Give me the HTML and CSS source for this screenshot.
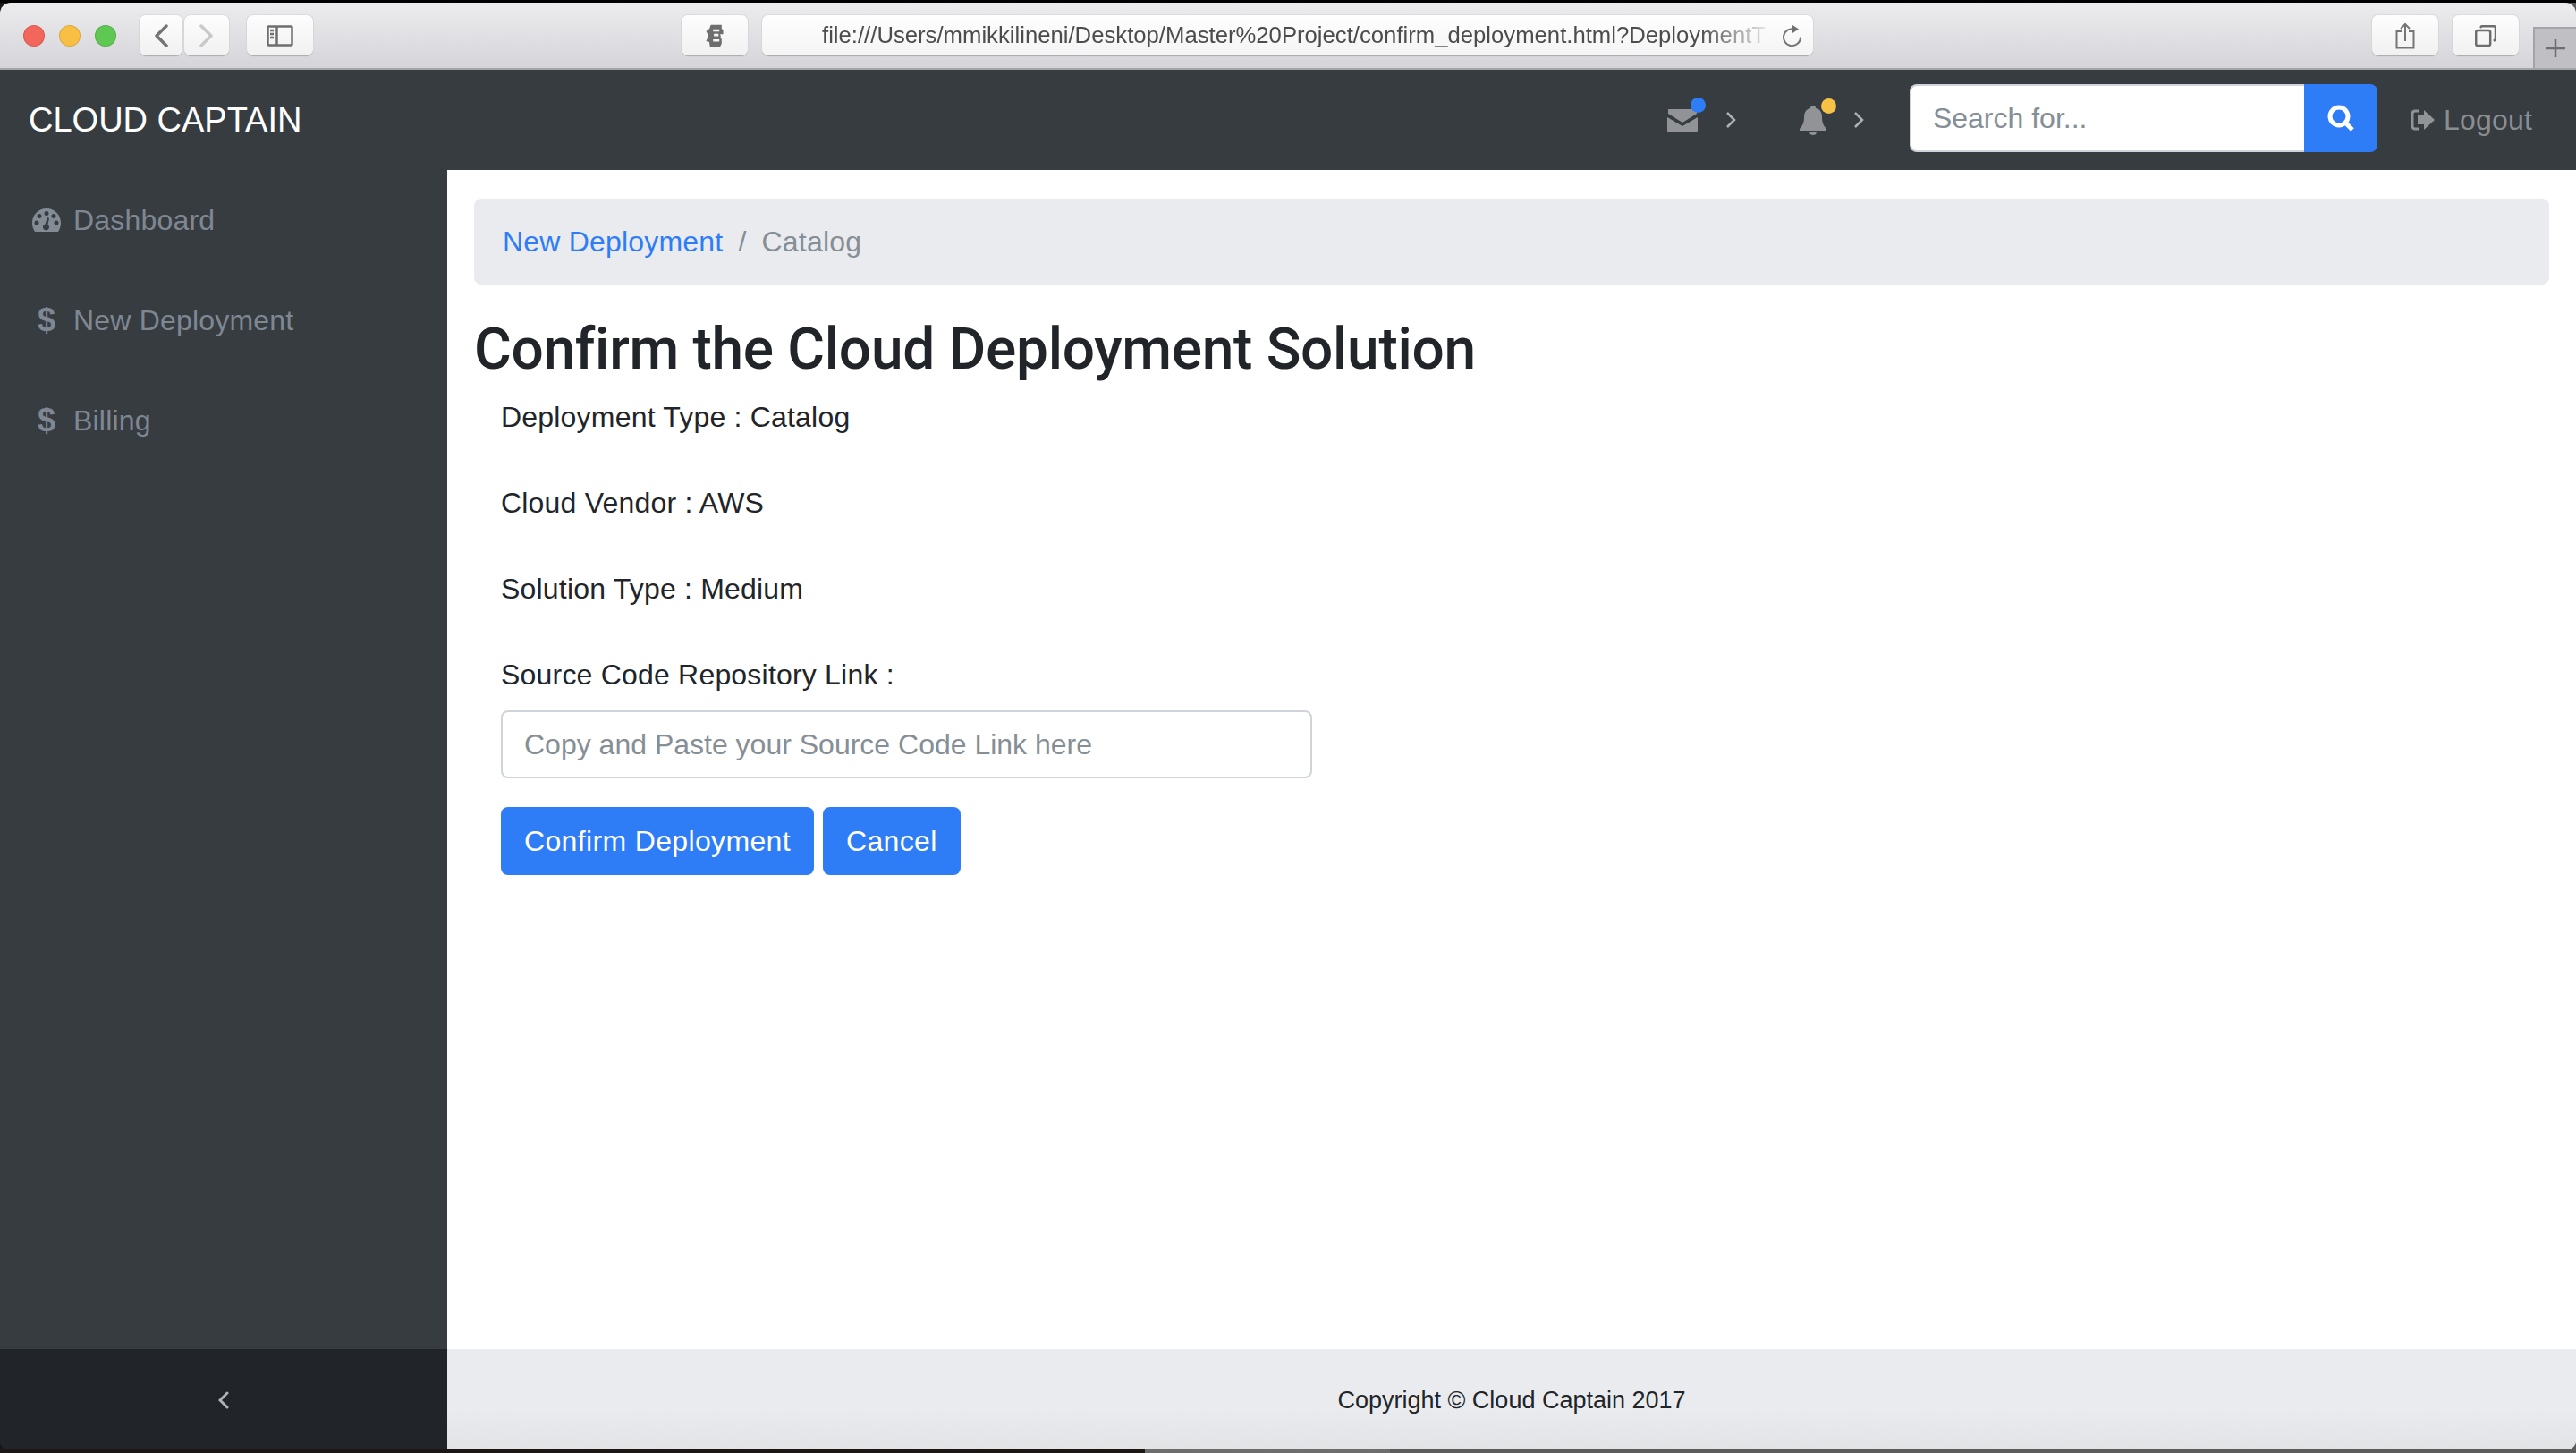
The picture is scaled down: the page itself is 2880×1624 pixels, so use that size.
FILE: index.html
```html
<!DOCTYPE html>
<html lang="en">
<head>
<meta charset="utf-8">
<title>Cloud Captain</title>
<link rel="stylesheet" href="styles.css">
</head>
<body>
<div class="window">
  <header class="toolbar">
    <span class="light red"></span><span class="light yellow"></span><span class="light green"></span>
    <div class="tb-btn back"><svg width="16" height="26" viewBox="0 0 16 26"><path d="M14 2 3 13l11 11" class="s dark"/></svg></div>
    <div class="tb-btn fwd"><svg width="16" height="26" viewBox="0 0 16 26"><path d="M2 2l11 11L2 24" class="s faint"/></svg></div>
    <div class="tb-btn side"><svg width="30" height="24" viewBox="0 0 30 24"><rect x="1.500" y="1.500" width="27" height="21" rx="1" class="s2"/><path d="M11.500 1.500v21" class="s2"/><path d="M4 6h4M4 10h4M4 14h4" class="s2"/></svg></div>
    <div class="tb-btn reader"><svg width="22" height="26" viewBox="0 0 24 30"><path d="M7 1h14v5l2 1v6h-4l1 3-1 2 2 1v6l-2 4H6l-1-6-4-1 3-7-3-6 4-3z" class="gray-fill"/><path d="M10 8h8M11 14h6M10 21h8" class="s3"/></svg></div>
    <div class="url">
      <span class="url-text">file:///Users/mmikkilineni/Desktop/Master%20Project/confirm_deployment.html?DeploymentT</span>
      <svg class="reload" width="22" height="26" viewBox="0 0 22 26"><path d="M13 5.500A9.500 9.500 0 1 0 20 14.500" class="s-thin"/><path d="M11 1l7 4.500-7 4.500z" class="gray-fill"/></svg>
    </div>
    <div class="tb-btn share"><svg width="22" height="30" viewBox="0 0 22 30"><path d="M7 10H1.500v18.500h19V10H15M11 21V2M6 7l5-5 5 5" class="s-thin"/></svg></div>
    <div class="tb-btn tabs"><svg width="24" height="24" viewBox="0 0 24 24"><rect x="1.200" y="6" width="16" height="17" rx="2" class="s2"/><path d="M6 3 7.500 1.200H21a2 2 0 0 1 2 2V16l-2 2" class="s2"/></svg></div>
    <div class="newtab"><svg width="22" height="20" viewBox="0 0 22 20"><path d="M11 0v20M0 10h22" class="s2"/></svg></div>
  </header>

  <nav class="topnav">
    <a class="brand">CLOUD CAPTAIN</a>
    <div class="nav-right">
      <div class="alert mail">
        <span class="alert-icon">
          <svg width="34" height="26" viewBox="0 0 34 26"><path d="M1 0h32v5L17 15 1 5zM0 9l17 10L34 9v15a2 2 0 0 1-2 2H2a2 2 0 0 1-2-2z" class="icon-fill"/></svg>
          <i class="dot blue"></i>
        </span>
        <svg class="chev" width="12" height="20" viewBox="0 0 12 20"><path d="M2 2l8 8-8 8" class="s-chev"/></svg>
      </div>
      <div class="alert bell">
        <span class="alert-icon">
          <svg width="30" height="33" viewBox="0 0 30 33"><path d="M15 0c2 0 3 1 3 3 5 1 7 5 7 10 0 6 2 10 5 13v2H0v-2c3-3 5-7 5-13C5 8 7 4 12 3c0-2 1-3 3-3zM11 29h8c0 3-2 4-4 4s-4-1-4-4z" class="icon-fill"/></svg>
          <i class="dot amber"></i>
        </span>
        <svg class="chev" width="12" height="20" viewBox="0 0 12 20"><path d="M2 2l8 8-8 8" class="s-chev"/></svg>
      </div>
      <form class="search">
        <input class="search-input" type="text" placeholder="Search for...">
        <button class="search-btn" type="button"><svg width="30" height="30" viewBox="0 0 30 30"><circle cx="13" cy="13" r="10" class="s-white"/><path d="M20 20l8 8" class="s-white"/></svg></button>
      </form>
      <a class="logout"><svg width="27" height="26" viewBox="0 0 27 26"><path d="M9 3H5a3 3 0 0 0-3 3v14a3 3 0 0 0 3 3h4" class="s-logout"/><path d="M8 8h7V2l12 11-12 11v-6H8z" class="icon-fill"/></svg>Logout</a>
    </div>
  </nav>

  <div class="shell">
    <aside class="sidebar">
      <ul class="side-nav">
        <li class="side-item"><svg class="gauge" width="32" height="26" viewBox="0 0 32 26"><path fill-rule="evenodd" d="M16 0C7 0 0 7 0 16c0 4 1 7 3 10h26c2-3 3-6 3-10C32 7 25 0 16 0zM16 3a2.500 2.500 0 1 1 0 5 2.500 2.500 0 0 1 0-5zM8 6a2.500 2.500 0 1 1 0 5 2.500 2.500 0 0 1 0-5zM24 6a2.500 2.500 0 1 1 0 5 2.500 2.500 0 0 1 0-5zM5 13.500a2.500 2.500 0 1 1 0 5 2.500 2.500 0 0 1 0-5zM27 13.500a2.500 2.500 0 1 1 0 5 2.500 2.500 0 0 1 0-5zM17 10l2 1-1.500 7a3.500 3.500 0 1 1-3-.500z" class="side-fill"/></svg><span>Dashboard</span></li>
        <li class="side-item"><span class="dollar">$</span><span>New Deployment</span></li>
        <li class="side-item"><span class="dollar">$</span><span>Billing</span></li>
      </ul>
      <div class="toggler"><svg width="12" height="20" viewBox="0 0 12 20"><path d="M10 2 2 10l8 8" class="s-toggle"/></svg></div>
    </aside>
    <main class="main">
      <div class="content">
        <ol class="crumbs">
          <li><a class="crumb-link">New Deployment</a></li>
          <li class="crumb-sep">/</li>
          <li class="crumb-now">Catalog</li>
        </ol>
        <h1 class="title">Confirm the Cloud Deployment Solution</h1>
        <form class="form">
          <div class="group"><label>Deployment Type : Catalog</label></div>
          <div class="group"><label>Cloud Vendor : AWS</label></div>
          <div class="group"><label>Solution Type : Medium</label></div>
          <div class="group">
            <label>Source Code Repository Link :</label>
            <input class="field" type="text" placeholder="Copy and Paste your Source Code Link here">
          </div>
          <div class="actions">
            <button class="btn" type="button">Confirm Deployment</button>
            <button class="btn" type="button">Cancel</button>
          </div>
        </form>
      </div>
      <footer class="footer">Copyright © Cloud Captain 2017</footer>
    </main>
  </div>
</div>
</body>
</html>
```
FILE: styles.css
```css
* { box-sizing: border-box; }
html, body { margin: 0; height: 100%; }
body {
  background: linear-gradient(90deg, #1a1714 1280px, #6d6d6d 1280px, #6d6d6d 1554px, #5c5c5c 1554px);
  border-top: 3px solid #000;
  overflow: hidden;
  font-family: "Liberation Sans", Arial, sans-serif;
  font-size: 32px;
  line-height: 48px;
  letter-spacing: .2px;
  color: #212529;
}
.window {
  height: 1617px;
  display: flex;
  flex-direction: column;
  border-radius: 12px 12px 10px 10px;
  overflow: hidden;
}
.toolbar {
  height: 75px;
  flex: none;
  display: flex;
  align-items: center;
  padding: 0 0 0 26px;
  background: linear-gradient(#ecebee, #d5d4d8);
  border-bottom: 2px solid #a4a3a7;
}
.light { width: 24px; height: 24px; border-radius: 50%; margin-right: 16px; border: 1px solid rgba(0,0,0,.12); }
.red { background: #f2665c; }
.yellow { background: #f9bf45; }
.green { background: #5fc853; margin-right: 26px; }
.tb-btn {
  height: 45px;
  display: flex;
  align-items: center;
  justify-content: center;
  background: linear-gradient(#fdfdfd, #f1f1f2);
  border-radius: 7px;
  box-shadow: 0 1px 1px #aaa9ac, 0 0 0 1px #dcdbde;
}
.back { width: 48px; margin-right: 2px; }
.fwd { width: 50px; margin-right: 20px; }
.side { width: 74px; margin-right: 412px; }
.reader { width: 74px; margin-right: 16px; }
.share { width: 74px; margin-right: 16px; }
.tabs { width: 74px; margin-right: 16px; }
.url {
  width: 1175px;
  height: 45px;
  margin-right: 625px;
  padding: 0 12px 0 67px;
  display: flex;
  align-items: center;
  justify-content: space-between;
  background: linear-gradient(#fefefe, #f4f4f5);
  border-radius: 7px;
  box-shadow: 0 1px 1px #aaa9ac, 0 0 0 1px #dcdbde;
}
.url-text {
  white-space: nowrap;
  font-size: 25.7px;
  line-height: 45px;
  letter-spacing: 0;
  color: #4c4c4c;
  -webkit-mask-image: linear-gradient(90deg, #000 93%, rgba(0,0,0,.12));
  mask-image: linear-gradient(90deg, #000 93%, rgba(0,0,0,.12));
}
.reload { flex: none; }
.newtab {
  width: 48px;
  height: 46px;
  align-self: flex-end;
  display: flex;
  align-items: center;
  justify-content: center;
  background: #c0bfc3;
  border-top: 2px solid #a4a3a7;
  border-left: 2px solid #a4a3a7;
}
.s { fill: none; stroke-width: 3.5px; stroke-linecap: round; stroke-linejoin: round; }
.dark { stroke: #747474; }
.faint { stroke: #c9c9c9; }
.s2 { fill: none; stroke: #6e6e6e; stroke-width: 2.500px; }
.s-thin { fill: none; stroke: #757575; stroke-width: 2px; }
.s3 { fill: none; stroke: #f6f6f6; stroke-width: 3px; }
.gray-fill { fill: #6e6e6e; }

.topnav {
  height: 112px;
  flex: none;
  display: flex;
  align-items: center;
  padding: 0 49px 0 32px;
  background: #373c41;
}
.brand { color: #fff; font-size: 38px; line-height: 48px; letter-spacing: 0; }
.nav-right { margin-left: auto; display: flex; align-items: center; }
.alert { display: flex; align-items: center; }
.alert-icon { position: relative; display: flex; }
.mail { margin-right: 71px; }
.bell { margin-right: 51px; }
.mail .alert-icon { margin-right: 31px; margin-top: 2px; }
.bell .alert-icon { margin-right: 30px; }
.icon-fill { fill: #919396; }
.dot { position: absolute; width: 17px; height: 17px; border-radius: 50%; }
.blue { background: #2f7df6; left: 26px; top: -13px; }
.amber { background: #f6c144; left: 24px; top: -8px; }
.chev { flex: none; }
.s-chev { fill: none; stroke: #a9b1b9; stroke-width: 2.500px; }
.search { display: flex; width: 523px; height: 76px; margin: 0 0 4px; }
.search-input {
  width: 441px;
  height: 76px;
  padding: 0 24px;
  font: 32px/48px "Liberation Sans", Arial, sans-serif;
  color: #495057;
  background: #fff;
  border: 2px solid #ced4da;
  border-right: 0;
  border-radius: 8px 0 0 8px;
  outline: 0;
}
.search-input::placeholder, .field::placeholder { color: #868e96; opacity: 1; }
.search-btn {
  width: 82px;
  height: 76px;
  padding: 0;
  display: flex;
  align-items: center;
  justify-content: center;
  background: #2f7df6;
  border: 0;
  border-radius: 0 8px 8px 0;
}
.s-white { fill: none; stroke: #fff; stroke-width: 5px; }
.logout { display: flex; align-items: center; gap: 10px; margin-left: 37px; color: #8a8e92; }
.s-logout { fill: none; stroke: #919396; stroke-width: 3px; }

.shell { flex: 1; min-height: 0; display: flex; }
.sidebar { width: 500px; flex: none; display: flex; flex-direction: column; background: #373c41; }
.side-nav { flex: 1; margin: 0; padding: 0; list-style: none; }
.side-item {
  height: 112px;
  display: flex;
  align-items: center;
  padding-left: 36px;
  color: #7f8892;
}
.gauge { margin-right: 14px; flex: none; }
.side-fill { fill: #838b94; }
.dollar { width: 32px; margin-right: 14px; text-align: center; font-size: 36px; font-weight: 700; }
.toggler {
  height: 112px;
  flex: none;
  display: flex;
  align-items: center;
  justify-content: center;
  padding-top: 2px;
  background: #212529;
}
.s-toggle { fill: none; stroke: #b0b4b9; stroke-width: 3px; stroke-linecap: round; }

.main { flex: 1; min-width: 0; display: flex; flex-direction: column; background: #fff; }
.content { flex: 1; padding: 32px 30px 0; }
.crumbs {
  height: 96px;
  margin: 0 0 34px;
  padding: 24px 32px;
  display: flex;
  gap: 17px;
  list-style: none;
  background: #eaebef;
  border-radius: 8px;
}
.crumb-link { color: #2f7df6; }
.crumb-sep, .crumb-now { color: #868e96; }
.title {
  margin: 0 0 13px;
  font-family: Roboto, "Liberation Sans", sans-serif;
  font-size: 64px;
  font-weight: 500;
  line-height: 77px;
  letter-spacing: -.3px;
  color: #212529;
}
.form { padding: 0 30px; margin: 0; }
.group { margin-bottom: 48px; }
.group:nth-child(4) { margin-bottom: 32px; }
.group label { display: block; }
.group:nth-child(4) label { margin-bottom: 16px; }
.field {
  display: block;
  width: 907px;
  height: 76px;
  padding: 0 24px;
  font: 32px/48px "Liberation Sans", Arial, sans-serif;
  color: #495057;
  background: #fff;
  border: 2px solid #ced4da;
  border-radius: 8px;
  outline: 0;
}
.actions { display: flex; gap: 10px; }
.btn {
  height: 76px;
  padding: 0 26px;
  font: 32px/48px "Liberation Sans", Arial, sans-serif;
  letter-spacing: .35px;
  color: #fff;
  background: #2f7df6;
  border: 0;
  border-radius: 8px;
}
.footer {
  height: 112px;
  flex: none;
  display: flex;
  align-items: center;
  justify-content: center;
  padding-top: 2px;
  font-size: 27px;
  letter-spacing: 0;
  background: linear-gradient(#eaebef 60%, #e2e3e5);
}
```
